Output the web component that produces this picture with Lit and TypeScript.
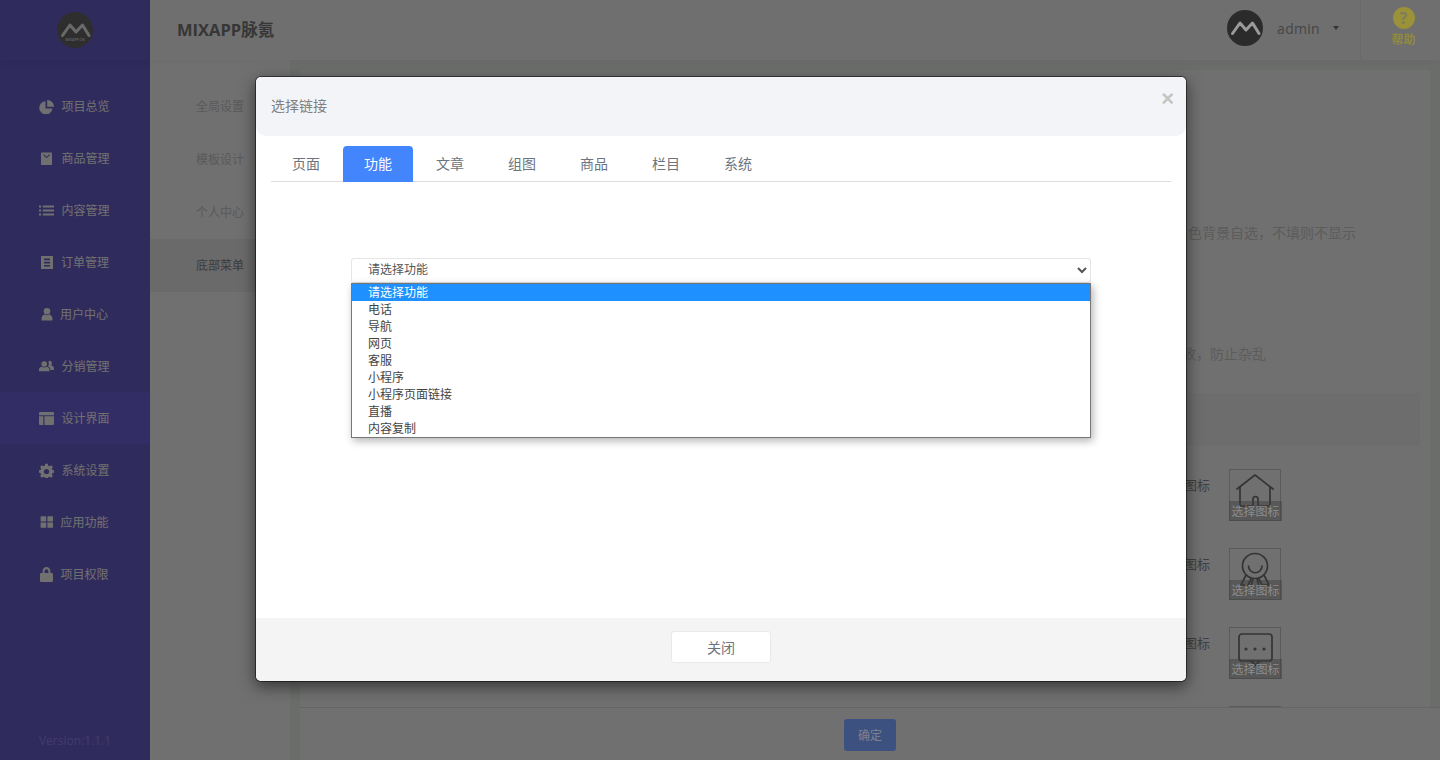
import { LitElement, html, css, svg } from "lit";
import { customElement } from "lit/decorators.js";

const FG = "currentColor";
const ICONS: Record<string, { w: number; body: unknown }> = {
  pie: { w: 15, body: svg`<path d="M6.5 2.2A6.6 6.6 0 1 0 13.4 9.4H6.5Z" fill=${FG}/><path d="M8.2 1A6.6 6.6 0 0 1 15 7.8H8.2Z" fill=${FG}/>` },
  bag: { w: 15, body: svg`<path d="M2 2.2A.8.8 0 0 1 2.8 1.4H12.2A.8.8 0 0 1 13 2.2V13.2A.8.8 0 0 1 12.2 14H2.8A.8.8 0 0 1 2 13.2Z" fill=${FG}/><path d="M4.4 3.6 7.5 6.6 10.6 3.6" fill="none" stroke="#6f62d3" stroke-width="1.1"/>` },
  list: { w: 15, body: svg`<path d="M0 2.5H2.2V4.5H0ZM3.8 2.5H15V4.5H3.8ZM0 6.5H2.2V8.5H0ZM3.8 6.5H15V8.5H3.8ZM0 10.5H2.2V12.5H0ZM3.8 10.5H15V12.5H3.8Z" fill=${FG}/>` },
  doc: { w: 14, body: svg`<path fill-rule="evenodd" d="M1 1H13V14H1ZM4 3.6V5.2H10V3.6ZM4 6.8V8.4H10V6.8ZM4 10V11.6H10V10Z" fill=${FG}/>` },
  user: { w: 12, body: svg`<circle cx="6" cy="4.2" r="3.3" fill=${FG}/><path d="M.6 13.6V11.2C.6 9 2.2 7.6 4 7.4 5.2 8.4 6.8 8.4 8 7.4 9.8 7.6 11.4 9 11.4 11.2V13.6Z" fill=${FG}/>` },
  users: { w: 15, body: svg`<circle cx="5.2" cy="5" r="2.8" fill=${FG}/><path d="M0 12.2V10.6C0 9 1.3 8 2.8 7.8 4.2 8.8 6.2 8.8 7.6 7.8 9.2 8 10.4 9 10.4 10.6V12.2Z" fill=${FG}/><path d="M9.2 2.8 10.6 1.8C12.2 1.6 13.4 3.2 12.8 4.8L12.4 6.4C13.8 6.8 15 7.6 15 9.4L14.6 11H11.4C11.4 8.8 10.2 7.6 8.8 7.2 10 6 10.2 4.2 9.2 2.8Z" fill=${FG}/>` },
  table: { w: 15, body: svg`<path d="M1.2 1H13.8A1.2 1.2 0 0 1 15 2.2V4.2H0V2.2A1.2 1.2 0 0 1 1.2 1ZM0 5.2H4.3V14H1.2A1.2 1.2 0 0 1 0 12.8ZM5.5 5.2H15V12.8A1.2 1.2 0 0 1 13.8 14H5.5Z" fill=${FG}/>` },
  gear: { w: 15, body: svg`<path fill-rule="evenodd" d="M6.2.8H8.8L9.2 2.7 10.5 3.2 12.1 2.2 13.9 4 12.9 5.6 13.4 6.9 15 7.2V9.8L13.4 10.1 12.9 11.4 13.9 13 12.1 14.8 10.5 13.8 9.2 14.3 8.8 15.2H6.2L5.8 14.3 4.5 13.8 2.9 14.8 1.1 13 2.1 11.4 1.6 10.1 0 9.8V7.2L1.6 6.9 2.1 5.6 1.1 4 2.9 2.2 4.5 3.2 5.8 2.7ZM7.5 5.9A2.6 2.6 0 1 0 7.5 11.1 2.6 2.6 0 1 0 7.5 5.9Z" fill=${FG}/>` },
  grid: { w: 13, body: svg`<path d="M.6 1.8A.6.6 0 0 1 1.2 1.2H5.6A.6.6 0 0 1 6.2 1.8V6.4H.6ZM7.4 1.8A.6.6 0 0 1 8 1.2H12.4A.6.6 0 0 1 13 1.8V6.4H7.4ZM.6 7.6H6.2V12.8H1.2A.6.6 0 0 1 .6 12.2ZM7.4 7.6H13V12.2A.6.6 0 0 1 12.4 12.8H7.4Z" fill=${FG}/>` },
  lock: { w: 13, body: svg`<path fill-rule="evenodd" d="M2.6 6V4.4C2.6 1.8 4.4 0 6.5 0S10.4 1.8 10.4 4.4V6H11.7A1.3 1.3 0 0 1 13 7.3V13.7A1.3 1.3 0 0 1 11.7 15H1.3A1.3 1.3 0 0 1 0 13.7V7.3A1.3 1.3 0 0 1 1.3 6ZM4.6 6H8.4V4.4C8.4 3 7.6 2.2 6.5 2.2S4.6 3 4.6 4.4Z" fill=${FG}/>` },
};

const MENU = [
  ["pie", "项目总览"], ["bag", "商品管理"], ["list", "内容管理"], ["doc", "订单管理"], ["user", "用户中心"],
  ["users", "分销管理"], ["table", "设计界面"], ["gear", "系统设置"], ["grid", "应用功能"], ["lock", "项目权限"],
];
const SUB = ["全局设置", "模板设计", "个人中心", "底部菜单"];
const TABS = ["页面", "功能", "文章", "组图", "商品", "栏目", "系统"];
const OPTIONS = ["请选择功能", "电话", "导航", "网页", "客服", "小程序", "小程序页面链接", "直播", "内容复制"];

const iconHome = svg`<path d="M8 20 26 6 44 20" /><path d="M11 18V37H24V30A2.5 2.5 0 0 1 29 30V37H41V18" />`;
const iconMedal = svg`<circle cx="26" cy="18" r="12.5" /><path d="M19.5 18A6.7 6.7 0 0 0 33 18" /><path d="M17 27 12 37H19L22 31M35 27 40 37H33L30 31M24 31 22 38M28 31 30 38" />`;
const iconChat = svg`<rect x="10" y="7" width="33" height="27" rx="3" /><path d="M22 34 26.5 38 31 34" /><circle cx="17" cy="22" r="1.6" fill="#777" stroke="none" /><circle cx="26" cy="22" r="1.6" fill="#777" stroke="none" /><circle cx="35" cy="22" r="1.6" fill="#777" stroke="none" />`;

const mark = (stroke: string) => svg`<path d="M5.5 23.5 13 13 19 20 25.5 13 32 23.5" fill="none" stroke=${stroke} stroke-width="3" stroke-linejoin="round" stroke-linecap="round"/>`;

@customElement("app-root")
export class AppRoot extends LitElement {
  static styles = css`
    :host { display: block; width: 1440px; height: 760px; overflow: hidden; position: relative; font-family: "Open Sans", "Noto Sans CJK SC", sans-serif; }
    * { box-sizing: border-box; }
    .page { display: flex; width: 1440px; height: 760px; background: #f3f7f3; }
    .side { width: 150px; flex: none; display: flex; flex-direction: column; background: #6f62d3; color: #fff; }
    .logo { height: 60px; display: flex; align-items: center; justify-content: center; box-shadow: 0 3px 6px rgba(0,0,0,.08); flex: none; margin-bottom: 20px; }
    .logo svg { display: block; }
    .logo text { font: 700 3.4px "Open Sans", sans-serif; fill: #d0d0d0; }
    .mi { height: 52px; display: flex; align-items: center; justify-content: center; gap: 7px; padding-right: 1px; font-size: 12px; color: #fff; flex: none; }
    .mi svg { flex: none; }
    .mi.on { background: #7568e6; }
    .ver { margin-top: auto; height: 38px; text-align: center; font-size: 12px; line-height: 38px; color: #9689f0; }
    .right { flex: 1; display: flex; flex-direction: column; min-width: 0; }
    .top { height: 60px; flex: none; display: flex; align-items: center; background: #fdfdfd; padding-left: 27px; box-shadow: 0 2px 6px rgba(0,0,0,.04); position: relative; }
    .brand { font-size: 16.5px; font-weight: 700; color: #7c7c7c; flex: 1; line-height: 60px; }
    .user { display: flex; align-items: center; height: 56px; margin-top: -4px; }
    .user svg { display: block; position: relative; z-index: 2; }
    .name { font-size: 14px; color: #a0a0a0; margin-left: 14px; letter-spacing: .3px; }
    .caret { width: 0; height: 0; border: 3.5px solid transparent; border-top: 4px solid #777; border-bottom: 0; margin-left: 13px; margin-right: 21px; }
    .help { width: 80px; height: 60px; border-left: 1px solid #6a6a6a; display: flex; flex-direction: column; align-items: center; padding: 7px 0 0 6px; color: #918a3e; position: relative; z-index: 2; }
    .help b { font-size: 12px; line-height: 16px; margin-top: 3px; font-weight: 700; }
    .help i { display: block; width: 22px; height: 22px; border-radius: 50%; background: #9a9138; color: #7e7c60; font: 700 16px/22px "Open Sans", sans-serif; text-align: center; }
    .body { flex: 1; display: flex; min-height: 0; }
    .sub { width: 140px; flex: none; background: #fff; padding-top: 20px; }
    .sub div { height: 53px; line-height: 53px; text-align: right; padding-right: 46px; font-size: 12px; color: #ccc; }
    .sub div.on { background: #f2f2f2; color: #888; }
    .main { flex: 1; display: flex; flex-direction: column; min-width: 0; padding-left: 10px; position: relative; }
    .panel { flex: 1; margin: 10px 10px 0 0; background: #fff; display: flex; flex-direction: column; padding: 0 10px 0 0; min-height: 0; overflow: hidden; }
    .hint { font-size: 14px; color: #d2d2d2; text-align: right; line-height: 20px; }
    .hint.a { margin-top: 153px; padding-right: 64px; }
    .hint.b { margin-top: 101px; padding-right: 154px; }
    .band { height: 53px; margin-top: 29px; background: #f8f8f8; flex: none; }
    .row { display: flex; justify-content: flex-end; align-items: flex-start; padding-right: 139px; flex: none; height: 79px; font-size: 13px; color: #909090; gap: 19px; }
    .rows { margin-top: 23px; }
    .row span { line-height: 32px; }
    .box { width: 52px; height: 52px; border: 1px solid #ccc; position: relative; flex: none; }
    .box svg { display: block; position: absolute; left: -1px; top: -1px; fill: none; stroke: #777; stroke-width: 1.7; stroke-linejoin: round; stroke-linecap: round; }
    .box em { position: absolute; left: -1px; right: -2px; bottom: -1px; height: 20px; background: rgba(60,60,60,.45); color: #8c8c8c; font-style: normal; font-size: 12px; line-height: 21px; text-align: center; white-space: nowrap; z-index: 2; }
    .foot { height: 53px; flex: none; background: #fff; border-top: 1px solid #e7e7e7; display: flex; justify-content: center; align-items: center; padding-top: 1px; }
    .ok { width: 52px; height: 32px; background: #3d5180; color: #7e8290; border: 0; border-radius: 3px; font: inherit; font-size: 12px; position: relative; z-index: 2; }
    .mask { position: absolute; inset: 0; background: rgba(0,0,0,.56); z-index: 1; }
    .modal { position: absolute; left: 255px; top: 76px; width: 932px; height: 606px; background: #fff; border: 1px solid rgba(0,0,0,.5); border-radius: 6px; box-shadow: 0 5px 15px rgba(0,0,0,.5); display: flex; flex-direction: column; overflow: hidden; background-clip: padding-box; z-index: 3; }
    .mh { height: 59px; flex: none; background: #f3f4f8; border-radius: 0 0 10px 10px; display: flex; align-items: center; justify-content: space-between; padding: 0 15px 3px; font-size: 14px; color: #808080; }
    .close { font: 700 22px/1 "Liberation Sans", sans-serif; color: #c4c4c4; margin: -13px -3px 0 0; }
    .tabs { margin: 10px 15px 0; height: 36px; flex: none; border-bottom: 1px solid #ddd; display: flex; gap: 2px; }
    .tab { width: 70px; height: 36px; line-height: 36px; text-align: center; font-size: 14px; color: #6c757d; border-radius: 4px 4px 0 0; }
    .tab.on { background: #4285fd; color: #fff; }
    .mb { flex: 1; display: flex; justify-content: center; padding-top: 76px; position: relative; }
    .sel { width: 740px; position: relative; height: 25px; }
    select { display: block; width: 100%; height: 25px; border: 1px solid #e6e6e6; border-bottom-color: #ddd; border-radius: 3px; background: #fff; padding: 0 12px 5px; font: 12px "Noto Sans CJK SC", sans-serif; color: #555; outline: 0; }
    .pop { position: absolute; left: 0; top: 25px; width: 740px; border: 1px solid #767676; background: #fff; box-shadow: 2px 3px 8px rgba(0,0,0,.3); font-size: 12px; color: #444; }
    .pop div { height: 17px; line-height: 17px; padding-left: 16px; white-space: nowrap; }
    .pop div.on { background: #1e90ff; color: #fff; }
    .mf { height: 63px; flex: none; background: #f4f4f4; display: flex; justify-content: center; align-items: flex-start; padding-top: 13px; }
    .btn { width: 100px; height: 32px; background: #fff; border: 1px solid #e7eaec; border-radius: 3px; font: inherit; font-size: 14px; color: #6c757d; }
  `;

  render() {
    return html`
      <div class="page">
        <aside class="side">
          <div class="logo">
            <svg width="36" height="36" viewBox="0 0 36 36"><circle cx="18" cy="18" r="18" fill="#6a6a6a"/>${mark("#f0f0f0")}<text x="18" y="29" text-anchor="middle">MIXAPP.CN</text></svg>
          </div>
          ${MENU.map(([ic, label], i) => html`
            <div class="mi ${i === 6 ? "on" : ""}">
              <svg width=${ICONS[ic].w} height="15" viewBox="0 0 ${ICONS[ic].w} 15">${ICONS[ic].body}</svg>
              <span>${label}</span>
            </div>`)}
          <div class="ver">Version:1.1.1</div>
        </aside>
        <div class="right">
          <header class="top">
            <div class="brand">MIXAPP脉氪</div>
            <div class="user">
              <svg width="36" height="36" viewBox="0 0 36 36"><circle cx="18" cy="18" r="18" fill="#2b2b2b"/>${mark("#9a9a9a")}</svg>
              <span class="name">admin</span>
              <span class="caret"></span>
            </div>
            <div class="help"><i>?</i><b>帮助</b></div>
          </header>
          <div class="body">
            <nav class="sub">${SUB.map((s, i) => html`<div class=${i === 3 ? "on" : ""}>${s}</div>`)}</nav>
            <section class="main">
              <div class="panel">
                <div class="hint a">色背景自选，不填则不显示</div>
                <div class="hint b">致，防止杂乱</div>
                <div class="band"></div>
                <div class="rows">
                  ${[iconHome, iconMedal, iconChat].map((ic) => html`
                    <div class="row">
                      <span>图标</span>
                      <div class="box"><svg width="52" height="52" viewBox="0 0 52 52">${ic}</svg><em>选择图标</em></div>
                    </div>`)}
                  <div class="row"><div class="box"></div></div>
                </div>
              </div>
              <div class="foot"><button class="ok">确定</button></div>
            </section>
          </div>
        </div>
      </div>
      <div class="mask"></div>
      <div class="modal">
        <div class="mh"><span>选择链接</span><span class="close">×</span></div>
        <div class="tabs">${TABS.map((t, i) => html`<div class="tab ${i === 1 ? "on" : ""}">${t}</div>`)}</div>
        <div class="mb">
          <div class="sel">
            <select><option>请选择功能</option></select>
            <div class="pop">${OPTIONS.map((o, i) => html`<div class=${i === 0 ? "on" : ""}>${o}</div>`)}</div>
          </div>
        </div>
        <div class="mf"><button class="btn">关闭</button></div>
      </div>
    `;
  }
}
